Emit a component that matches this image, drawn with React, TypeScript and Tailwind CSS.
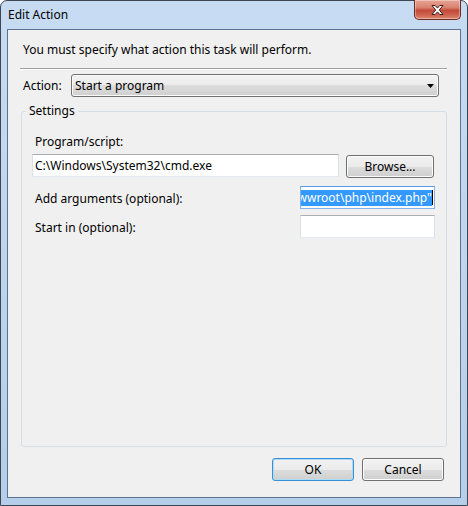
import type { ReactNode } from "react";

const btnFace =
  "bg-[linear-gradient(to_bottom,#f2f2f2_0%,#ebebeb_50%,#dddddd_50%,#cfcfcf_100%)] shadow-[inset_0_0_0_1px_#fcfcfc]";

function CloseButton() {
  return (
    <div className="-mt-px flex h-[20px] w-[47px] items-center justify-center rounded-b-[5px] border border-t-0 border-[#6b2a22] bg-[linear-gradient(to_bottom,#e8a596_0%,#d9806e_40%,#c24a39_55%,#cf6450_80%,#e08a72_100%)] shadow-[inset_0_0_0_1px_rgba(255,255,255,0.35)]">
      <svg width="15" height="12" viewBox="0 0 15 12">
        <path
          d="M2 1.5h3.2l2.3 2.6 2.3-2.6H13L9.3 6l3.7 4.5H9.8L7.5 7.9 5.2 10.5H2L5.7 6z"
          fill="#ffffff"
          stroke="#3b1c1a"
          strokeWidth="1"
          strokeLinejoin="round"
        />
      </svg>
    </div>
  );
}

function Button({ children, isDefault = false }: { children: ReactNode; isDefault?: boolean }) {
  return (
    <div
      className={`flex h-[23px] w-[82px] items-center justify-center rounded-[3px] border text-[12px] leading-[16px] ${
        isDefault
          ? "border-[#3c8fd0] bg-[linear-gradient(to_bottom,#f2f2f2_0%,#ebebeb_50%,#dddddd_50%,#cfcfcf_100%)] shadow-[inset_0_0_0_1px_#a9dcf7]"
          : `border-[#707070] ${btnFace}`
      }`}
    >
      {children}
    </div>
  );
}

function TextBox({ width, children }: { width: string; children?: ReactNode }) {
  return (
    <div
      className={`flex h-[23px] items-center overflow-hidden border border-[#dbdfe6] border-t-[#abadb3] border-b-[#e3e9ef] bg-white pl-[2px] text-[12px] leading-[16px] ${width}`}
    >
      {children}
    </div>
  );
}

export default function App() {
  return (
    <div
      className="h-[506px] w-[468px] overflow-hidden bg-white text-black"
      style={{ fontFamily: '"Noto Sans", "Open Sans", sans-serif' }}
    >
      <div className="flex h-full flex-col rounded-t-[7px] border border-[#3e4652] bg-[linear-gradient(to_bottom,#c7dcf2,#b5cee9)] px-[6px] pb-[7px]">
        {/* Title bar */}
        <div className="flex h-[28px] items-start justify-between">
          <span className="pl-px pt-[6px] text-[12px] leading-[16px]">Edit Action</span>
          <CloseButton />
        </div>

        {/* Client area */}
        <div className="flex flex-1 flex-col border border-[#5b7391] bg-[#f0f0f0] px-[13px] pt-[12px]">
          <p className="pl-[2px] text-[12px] leading-[16px]">
            You must specify what action this task will perform.
          </p>
          <div className="-ml-px mt-[10px] border-t border-b border-t-[#a0a0a0] border-b-white" />

          <div className="mt-[4px] flex items-center">
            <span className="ml-[2px] w-[48px] text-[12px] leading-[16px]">Action:</span>
            <div
              className={`flex h-[23px] w-[368px] items-center justify-between rounded-[3px] border border-[#707070] pl-[3px] pr-[4px] text-[12px] leading-[16px] ${btnFace}`}
            >
              <span>Start a program</span>
              <svg width="7" height="4" viewBox="0 0 7 4">
                <path d="M0 0h7L3.5 4z" fill="#000" />
              </svg>
            </div>
          </div>

          <fieldset className="mt-[6px] flex-1 rounded-[3px] border border-[#d5dfe5] pl-[10px] pr-[11px] pt-[15px]">
            <legend className="-ml-[6px] px-[3px] text-[12px] leading-[16px]">Settings</legend>

            <div className="ml-[3px] text-[12px] leading-[16px]">Program/script:</div>
            <div className="mt-[4px] flex items-start">
              <TextBox width="w-[307px]">C:\Windows\System32\cmd.exe</TextBox>
              <div className="ml-[7px] mt-px">
                <div
                  className={`flex h-[23px] w-[88px] items-center justify-center rounded-[3px] border border-[#707070] text-[12px] leading-[16px] ${btnFace}`}
                >
                  Browse...
                </div>
              </div>
            </div>

            <div className="mt-[8px] flex items-center">
              <span className="ml-[3px] pt-[2px] text-[12px] leading-[16px]">Add arguments (optional):</span>
              <div className="ml-auto flex h-[23px] w-[135px] items-center justify-end overflow-hidden border border-[#7eb4ea] border-t-[#569de5] bg-white px-px text-[12px] leading-[16px]">
                <span className="whitespace-nowrap bg-[#3399ff] text-white">
                  "C:\inetpub\wwwroot\php\index.php"
                </span>
                <span className="h-[15px] w-px shrink-0 bg-black" />
              </div>
            </div>

            <div className="mt-[6px] flex items-center">
              <span className="ml-[3px] pt-[2px] text-[12px] leading-[16px]">Start in (optional):</span>
              <div className="ml-auto">
                <TextBox width="w-[135px]" />
              </div>
            </div>
          </fieldset>

          <div className="mb-[16px] mr-[3px] mt-[11px] flex justify-end gap-[8px]">
            <Button isDefault>OK</Button>
            <Button>Cancel</Button>
          </div>
        </div>
      </div>
    </div>
  );
}
